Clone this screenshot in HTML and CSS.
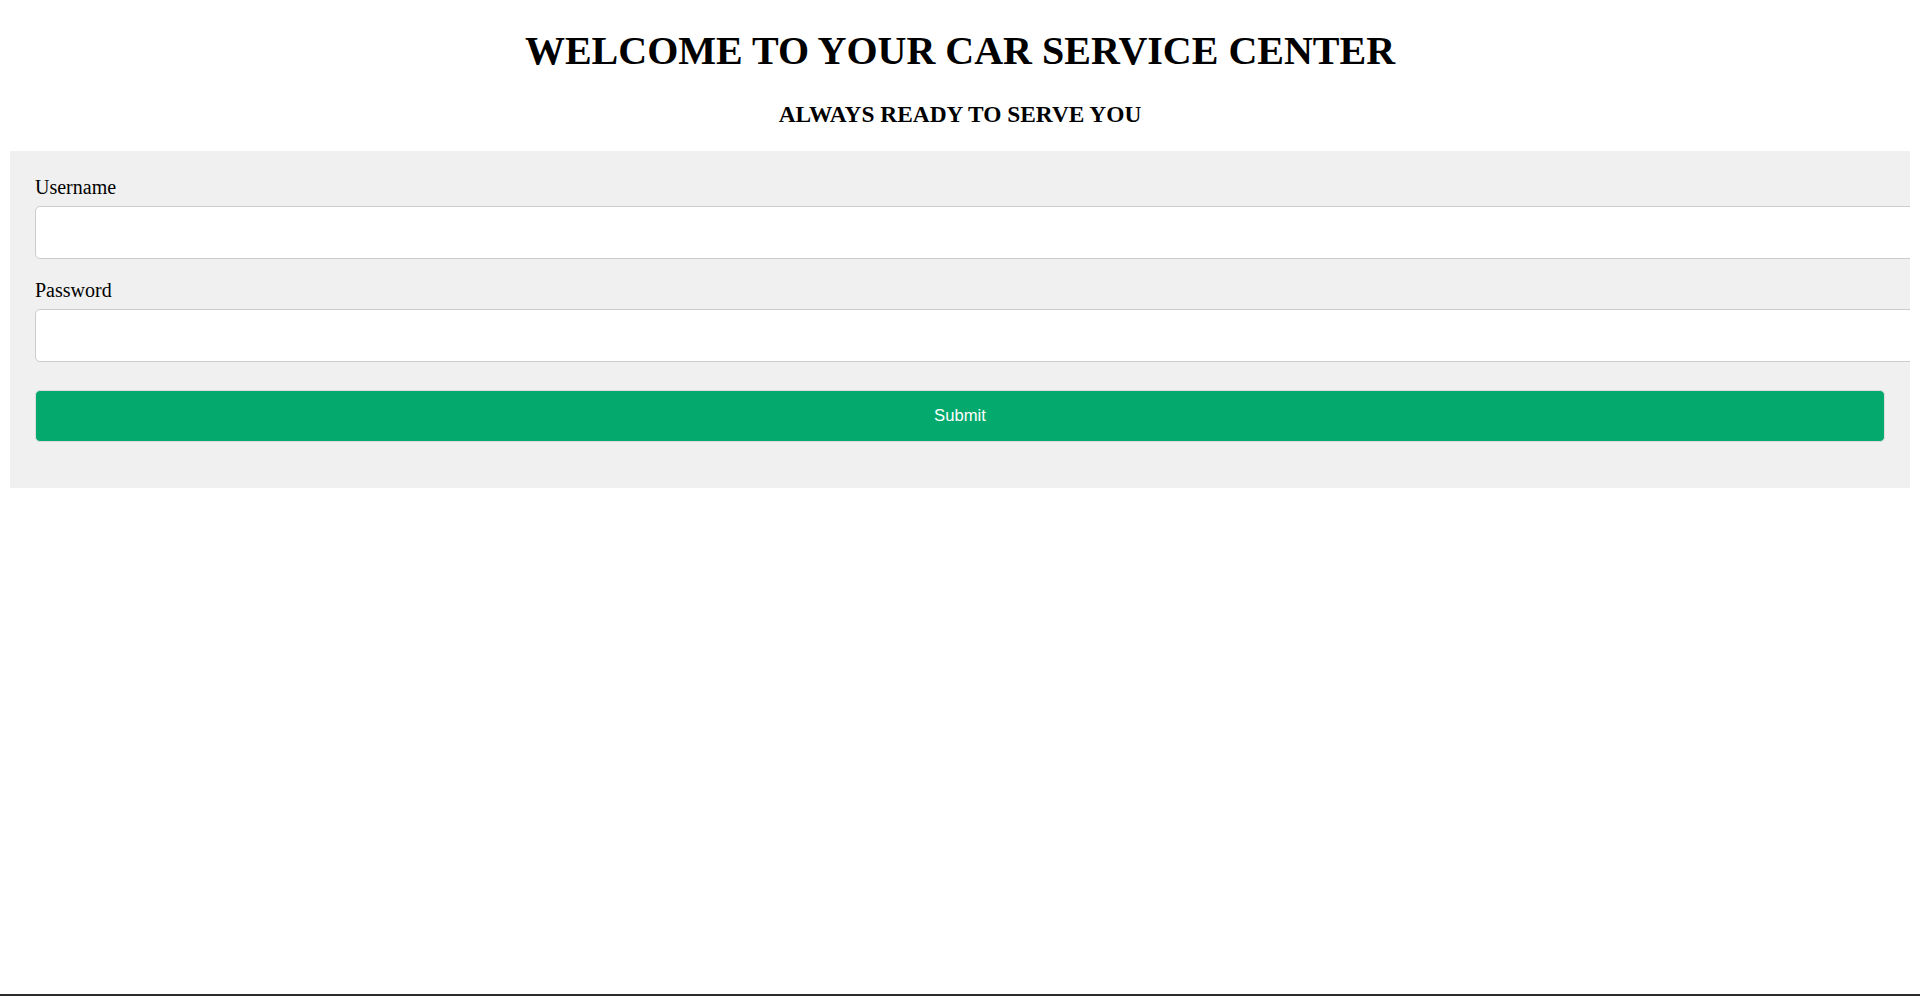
FILE: index.html
```html
<!DOCTYPE html>
<html lang="en">
<head>
<meta charset="utf-8">
<title>Car Service Center</title>
<link rel="stylesheet" href="styles.css">
</head>
<body>
<h1 class="title">WELCOME TO YOUR CAR SERVICE CENTER</h1>
<h3 class="subtitle">ALWAYS READY TO SERVE YOU</h3>
<form class="panel">
  <label class="field-label" for="username">Username</label>
  <input class="field-input" type="text" id="username" name="username">
  <label class="field-label field-label-next" for="password">Password</label>
  <input class="field-input" type="password" id="password" name="password">
  <button class="submit-btn" type="submit">Submit</button>
</form>
</body>
</html>
```
FILE: styles.css
```css
html {
  min-height: 100%;
  background: #fff linear-gradient(to top, #2b2b2b 2px, #ffffff 2px) no-repeat;
}
body {
  margin: 10px;
  font-family: "Liberation Serif", "Times New Roman", serif;
  color: #000;
}
.title {
  font-size: 40px;
  font-weight: bold;
  text-align: center;
  margin: 18.2px 0 26.8px;
  line-height: 46px;
}
.subtitle {
  font-size: 23.4px;
  font-weight: bold;
  text-align: center;
  margin: 26.8px 0 23.4px;
  line-height: 27px;
}
.panel {
  background: #f0f0f0;
  padding: 25px 25px 46px;
  display: flex;
  flex-direction: column;
  align-items: flex-start;
}
.field-label {
  display: block;
  font-size: 20px;
  line-height: 23px;
  margin-bottom: 7px;
}
.field-label-next {
  margin-top: 20px;
  margin-bottom: 7px;
}
.field-input {
  box-sizing: border-box;
  width: calc(100% + 33px);
  height: 53px;
  padding: 0 15px;
  margin: 0;
  border: 1px solid #cccccc;
  border-radius: 5px;
  background: #fff;
  font-size: 16.67px;
  font-family: "Liberation Sans", Arial, sans-serif;
}
.submit-btn {
  box-sizing: border-box;
  width: 100%;
  height: 52px;
  margin-top: 28px;
  background: #04aa6d;
  color: #fff;
  border: 1px solid #dddddd;
  border-radius: 5px;
  font-family: "Liberation Sans", Arial, sans-serif;
  font-size: 16.67px;
}
```
